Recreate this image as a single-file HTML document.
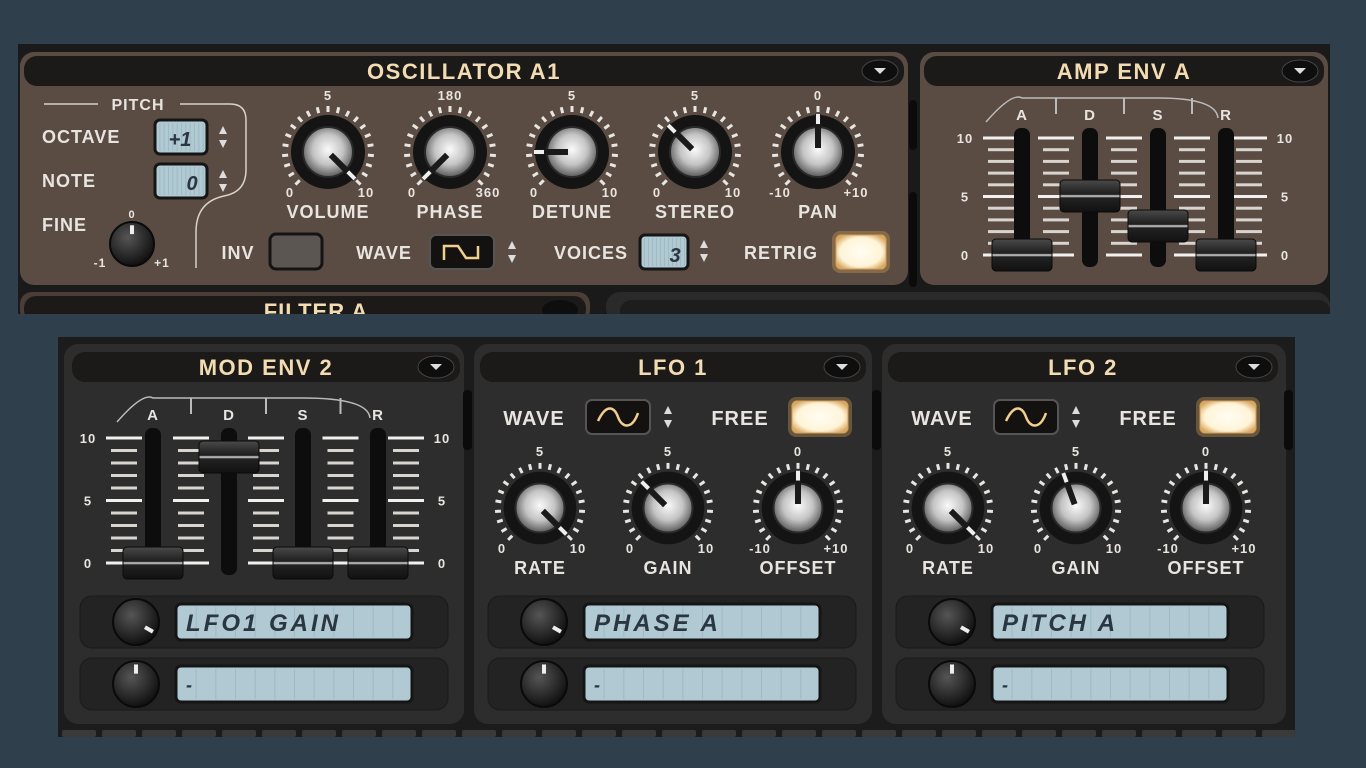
<!DOCTYPE html>
<html><head><meta charset="utf-8"><style>
html,body{margin:0;padding:0;background:#2f3f4b;width:1366px;height:768px;overflow:hidden}
svg{display:block}
text{font-family:"Liberation Sans",sans-serif;font-weight:bold}
</style></head><body>
<svg id="s" width="1366" height="768" xmlns="http://www.w3.org/2000/svg">
<defs>
<radialGradient id="metal" cx="50%" cy="45%" r="55%">
<stop offset="0" stop-color="#fafafa"/><stop offset="0.55" stop-color="#c4c4c4"/><stop offset="1" stop-color="#5a5a5a"/></radialGradient>
<linearGradient id="cap" x1="0" y1="0" x2="0" y2="1">
<stop offset="0" stop-color="#4a4a4a"/><stop offset="0.45" stop-color="#1e1e1e"/><stop offset="0.5" stop-color="#dddddd"/><stop offset="0.56" stop-color="#222"/><stop offset="1" stop-color="#111"/></linearGradient>
<radialGradient id="dark" cx="40%" cy="35%" r="65%"><stop offset="0" stop-color="#555"/><stop offset="1" stop-color="#111"/></radialGradient>
<radialGradient id="glow" cx="50%" cy="50%" r="60%"><stop offset="0" stop-color="#fffdf3"/><stop offset="0.7" stop-color="#fff4d8"/><stop offset="1" stop-color="#d9a860"/></radialGradient>
</defs>
</svg>
<script>
var o='';
function R(x,y,w,h,f,rx,ex){o+='<rect x="'+x+'" y="'+y+'" width="'+w+'" height="'+h+'" fill="'+f+'" rx="'+(rx||0)+'" '+(ex||'')+'/>';}
function T(x,y,t,s,f,a,ex){o+='<text x="'+x+'" y="'+y+'" font-size="'+s+'" fill="'+(f||'#e8e4df')+'" text-anchor="'+(a||'middle')+'" '+(ex||'letter-spacing="1"')+'>'+t+'</text>';}
function header(x,y,w,t){R(x,y,w,30,'#1b1a19',13);T(x+w/2,y+23,t,22,'#f3dcb2','middle','letter-spacing="1.5"');
 o+='<ellipse cx="'+(x+w-24)+'" cy="'+(y+15)+'" rx="18" ry="11" fill="#0e0e0e" stroke="#444" stroke-width="1"/><path d="M'+(x+w-30)+' '+(y+12)+'h12l-6 6z" fill="#ddd"/>';}
function knob(cx,cy,ang,lab,lo,hi,top,rr){rr=rr||1;
 var n=21;for(var i=0;i<n;i++){var a=(-135+270*i/(n-1))*Math.PI/180;var r1=40*rr,r2=46*rr;
  o+='<line x1="'+(cx+Math.sin(a)*r1)+'" y1="'+(cy-Math.cos(a)*r1)+'" x2="'+(cx+Math.sin(a)*r2)+'" y2="'+(cy-Math.cos(a)*r2)+'" stroke="#e8e6e2" stroke-width="3"/>';}
 o+='<circle cx="'+cx+'" cy="'+cy+'" r="'+(37*rr)+'" fill="#141414"/><circle cx="'+cx+'" cy="'+cy+'" r="'+(25*rr)+'" fill="url(#metal)" stroke="#2a2a2a" stroke-width="2"/>';
 var a=ang*Math.PI/180;o+='<line x1="'+(cx+Math.sin(a)*4)+'" y1="'+(cy-Math.cos(a)*4)+'" x2="'+(cx+Math.sin(a)*38*rr)+'" y2="'+(cy-Math.cos(a)*38*rr)+'" stroke="#1a1a1a" stroke-width="6"/>';
 o+='<line x1="'+(cx+Math.sin(a)*28*rr)+'" y1="'+(cy-Math.cos(a)*28*rr)+'" x2="'+(cx+Math.sin(a)*38*rr)+'" y2="'+(cy-Math.cos(a)*38*rr)+'" stroke="#eee" stroke-width="4"/>';
 T(cx,cy-52,top,13);T(cx-38,cy+45,lo,13);T(cx+38,cy+45,hi,13);T(cx,cy+66,lab,18);}
function small(cx,cy,ang,r){r=r||23;o+='<circle cx="'+cx+'" cy="'+cy+'" r="'+r+'" fill="url(#dark)" stroke="#0a0a0a" stroke-width="2"/>';var a=ang*Math.PI/180;
 o+='<line x1="'+(cx+Math.sin(a)*r*0.45)+'" y1="'+(cy-Math.cos(a)*r*0.45)+'" x2="'+(cx+Math.sin(a)*r*0.85)+'" y2="'+(cy-Math.cos(a)*r*0.85)+'" stroke="#eee" stroke-width="4"/>';}
function faders(xs,y10,y0,caps,lx,rx,arcY,lblY){
 var xsL=[lx+36].concat(xs.slice(0,-1).map(function(v,i){return (v+xs[i+1])/2;})).concat([rx-36]);
 for(var i=0;i<=10;i++){var y=y0-(y0-y10)*i/10;var big=(i%5==0);
  xsL.forEach(function(cx){R(cx-(big?18:13),y-1.5,big?36:26,3,big?'#f2f0ec':'#d8d4cf');});}
 T(lx,y10+5,'10',13);T(lx,(y10+y0)/2+5,'5',13);T(lx,y0+5,'0',13);T(rx,y10+5,'10',13);T(rx,(y10+y0)/2+5,'5',13);T(rx,y0+5,'0',13);
 var L=['A','D','S','R'];xs.forEach(function(x,i){R(x-8,y10-10,16,y0-y10+22,'#0d0d0d',7);T(x,lblY,L[i],15,'#e8e4df');});
 o+='<path d="M'+(xs[0]-36)+' '+(lblY+2)+'Q'+(xs[0]-10)+' '+(arcY-6)+' '+xs[0]+' '+arcY+'L'+xs[2]+' '+arcY+'Q'+(xs[3]-10)+' '+arcY+' '+(xs[3]-8)+' '+(lblY-2)+'" stroke="#bbb" fill="none" stroke-width="1.5"/>';
 for(var i=0;i<3;i++){var mx=(xs[i]+xs[i+1])/2;R(mx-1,arcY,2,16,'#bbb');}
 caps.forEach(function(cy,i){R(xs[i]-30,cy-16,60,32,'url(#cap)',4,'stroke="#0a0a0a"');});}
function lcd(x,y,w,h,t,sz){R(x,y,w,h,'#b0c9d2',5,'stroke="#151515" stroke-width="3"');for(var i=1;i<12;i++){R(x+i*w/12,y+3,1,h-6,'#a0bac4');}
 T(x+10,y+h/2+sz*0.38,t,sz,'#2a3640','start','font-family="Liberation Mono" font-style="italic" letter-spacing="3"');}
function ledbtn(x,y,w,h){R(x-4,y-4,w+8,h+8,'#d9a150',8,'opacity="0.35"');R(x,y,w,h,'url(#glow)',5,'stroke="#cfa060"');}
function arrows(x,y){o+='<path d="M'+(x-4)+' '+(y-3)+'l4-8l4 8zM'+(x-4)+' '+(y+3)+'l4 8l4-8z" fill="#ddd"/>';}
function wavebox(x,y,sine){R(x,y,64,34,'#141210',6,'stroke="#555" stroke-width="2"');
 if(sine){o+='<path d="M'+(x+12)+' '+(y+21)+'C'+(x+20)+' '+(y+4)+' '+(x+28)+' '+(y+6)+' '+(x+32)+' '+(y+17)+'S'+(x+46)+' '+(y+30)+' '+(x+52)+' '+(y+13)+'" stroke="#f2cf8f" fill="none" stroke-width="2.5"/>';}
 else{o+='<path d="M'+(x+14)+' '+(y+25)+'V'+(y+11)+'H'+(x+28)+'L'+(x+36)+' '+(y+23)+'H'+(x+48)+'V'+(y+11)+'" stroke="#f2cf8f" fill="none" stroke-width="2.5"/>';}
 arrows(x+82,y+17);}

R(18,44,1312,270,'#1a1a1a');
R(20,52,888,233,'#5a4c43',14);
R(920,52,408,233,'#5a4c43',14);
R(909,100,8,50,'#0b0b0b',4);R(909,192,8,95,'#0b0b0b',4);
header(24,56,880,'OSCILLATOR A1');
header(924,56,400,'AMP ENV A');
R(20,292,570,30,'#4a3e37',12);R(24,296,562,26,'#1b1a19',12);T(316,319,'FILTER A',22,'#f3dcb2');
o+='<ellipse cx="560" cy="310" rx="18" ry="10" fill="#0e0e0e"/>';
R(606,292,724,30,'#2a2a2a',14);R(620,300,710,22,'#1d1d1d',12);
R(18,314,1312,10,'#2f3f4b');
T(138,110,'PITCH',16);o+='<path d="M44 104H98M180 104H230Q246 104 246 120V170Q246 192 224 196Q196 202 196 232V268" stroke="#d8d2cc" fill="none" stroke-width="1.5"/>';
T(42,143,'OCTAVE',18,null,'start');T(42,187,'NOTE',18,null,'start');T(42,231,'FINE',18,null,'start');
lcd(155,120,52,34,'',1);T(180,146,'+1',20,'#2a3640','middle','font-style="italic" font-family="Liberation Mono"');arrows(223,137);
lcd(155,164,52,34,'',1);T(192,190,'0',20,'#2a3640','middle','font-style="italic" font-family="Liberation Mono"');arrows(223,181);
small(132,244,0,22);T(132,218,'0',11);T(100,267,'-1',12);T(162,267,'+1',12);
knob(328,152,135,'VOLUME','0','10','5');
knob(450,152,-135,'PHASE','0','360','180');
knob(572,152,-90,'DETUNE','0','10','5');
knob(695,152,-45,'STEREO','0','10','5');
knob(818,152,0,'PAN','-10','+10','0');
T(238,259,'INV',18);R(270,234,52,35,'#5b5652',6,'stroke="#141414" stroke-width="3"');
T(384,259,'WAVE',18);wavebox(430,235,false);
T(591,259,'VOICES',18);lcd(640,235,48,34,'',1);T(675,262,'3',20,'#2a3640','middle','font-style="italic" font-family="Liberation Mono"');arrows(704,251);
T(781,259,'RETRIG',18);ledbtn(836,235,50,34);
faders([1022,1090,1158,1226],138,255,[255,196,226,255],965,1285,98,120);

R(58,337,1237,400,'#1c1c1c');
R(64,344,400,380,'#2d2d2d',14);R(474,344,398,380,'#2d2d2d',14);R(882,344,404,380,'#2d2d2d',14);
R(463,390,9,60,'#0b0b0b',4);R(872,390,9,60,'#0b0b0b',4);R(1284,390,9,60,'#0b0b0b',4);
header(72,352,388,'MOD ENV 2');header(480,352,386,'LFO 1');header(888,352,390,'LFO 2');
faders([153,229,303,378],438,563,[563,457,563,563],88,442,398,420);
function lfo(ox,knobs){T(ox+56,425,'WAVE',20);wavebox(ox+108,400,true);T(ox+262,425,'FREE',20);ledbtn(ox+314,401,56,32);
 knob(ox+62,508,knobs[0],'RATE','0','10','5',0.98);knob(ox+190,508,knobs[1],'GAIN','0','10','5',0.98);knob(ox+320,508,knobs[2],'OFFSET','-10','+10','0',0.98);}
lfo(478,[135,-45,0]);lfo(886,[135,-20,0]);
function rows(ox,t){R(ox,596,368,52,'#232323',12,'stroke="#1a1a1a"');R(ox,658,368,52,'#232323',12,'stroke="#1a1a1a"');
 small(ox+56,622,120);small(ox+56,684,0);lcd(ox+96,604,236,36,t,24);lcd(ox+96,666,236,36,'-',18);}
rows(80,'LFO1 GAIN');rows(488,'PHASE A');rows(896,'PITCH A');
for(var x=62;x<1295;x+=40){R(x,730,34,7,'#3a3a3a',2);}
document.getElementById('s').insertAdjacentHTML('beforeend',o);
</script>
</body></html>
